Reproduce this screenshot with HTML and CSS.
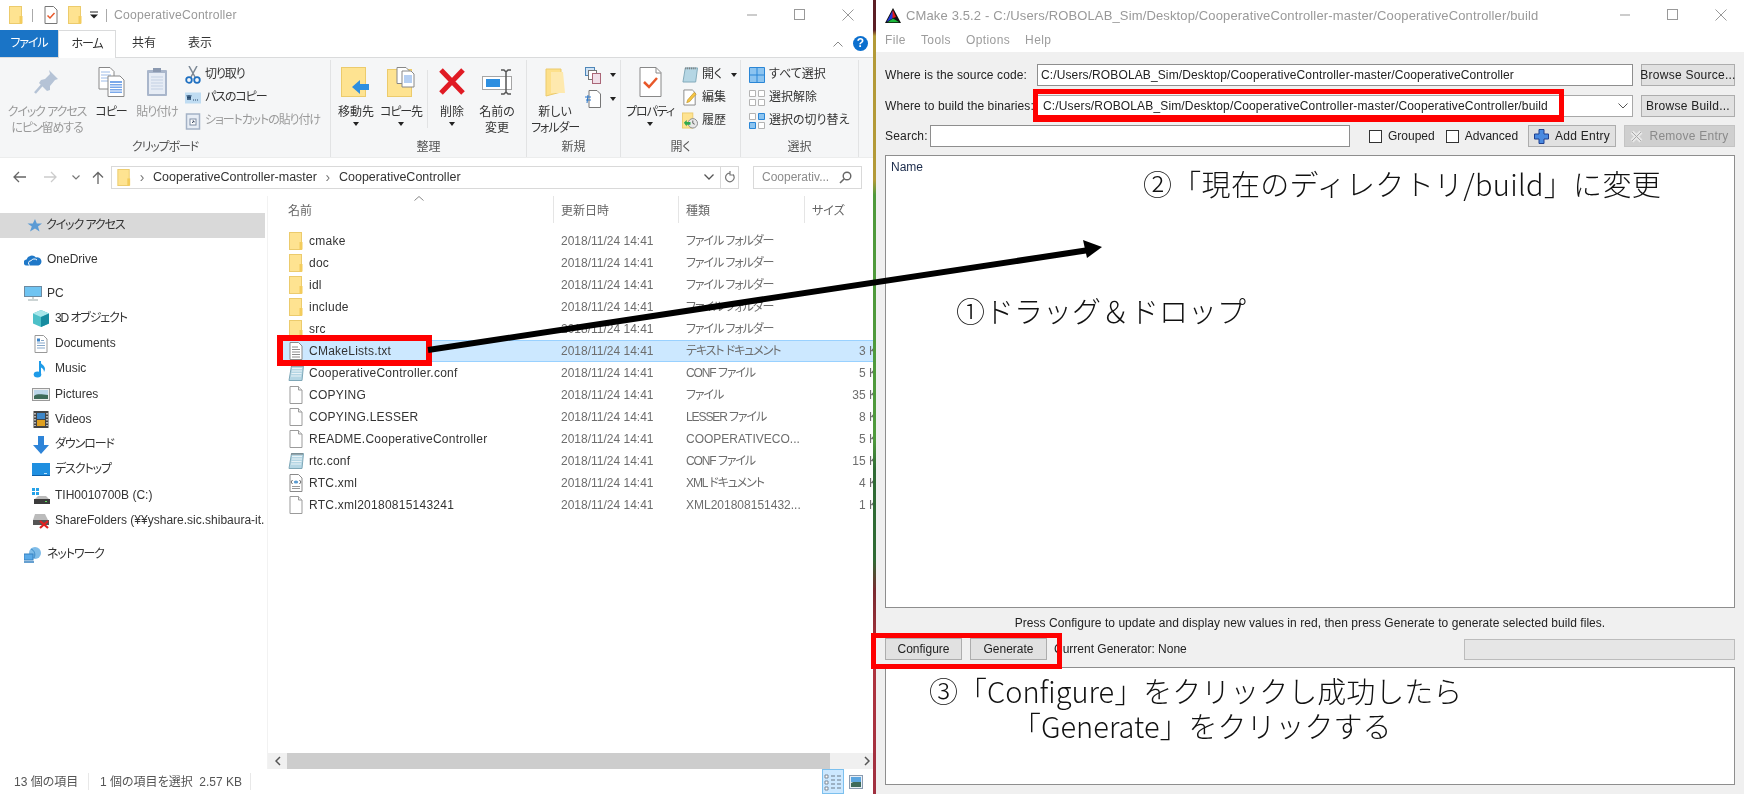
FILE: index.html
```html
<!DOCTYPE html>
<html lang="ja">
<head>
<meta charset="utf-8">
<title>CMake drag and drop</title>
<link rel="stylesheet" href="styles.css">
</head>
<body>
<svg class="defs" width="0" height="0" aria-hidden="true">
  <symbol id="folder" viewBox="0 0 14 18"><rect x=".5" y=".5" width="12" height="17" fill="#fee391" stroke="#eccb6c"/><rect x="10.5" y="10" width="3" height="7.5" fill="#f3cc5c"/></symbol>
  <symbol id="file" viewBox="0 0 14 18"><path d="M1 .5h8.5l3.5 3.5v13.5H1z" fill="#fff" stroke="#9b9b9b"/><path d="M9.5.5V4H13" fill="#eee" stroke="#9b9b9b"/></symbol>
  <symbol id="txt" viewBox="0 0 14 18"><path d="M1 .5h8.5l3.5 3.5v13.5H1z" fill="#fff" stroke="#8a8a8a"/><path d="M3 5h6M3 7.500h8M3 10h8M3 12.500h8M3 15h8" stroke="#8c8c8c"/></symbol>
  <symbol id="conf" viewBox="0 0 16 18"><path d="M3.500 1.500h12l-1.500 15H1z" fill="#b5d6e4" stroke="#7fa8b8"/><path d="M4 4.500h10M4 7h10M3.500 9.500h10M3 12h10" stroke="#e8f2f6"/><path d="M4 1v2M6 1v2M8 1v2M10 1v2M12 1v2M14 1v2" stroke="#777"/></symbol>
  <symbol id="xml" viewBox="0 0 14 18"><path d="M1 .5h8.500l3.500 3.500v13.500H1z" fill="#fff" stroke="#8a8a8a"/><ellipse cx="7" cy="8" rx="2.200" ry="1.600" fill="#5a9bd0"/><path d="M3.500 6L2 8l1.500 2M10.500 6L12 8l-1.500 2" fill="none" stroke="#666"/><path d="M3 12.500h8M3 14.500h8" stroke="#999"/></symbol>
</svg>

<div class="page">
  <section class="explorer">
    <header class="titlebar">
      <svg width="14" height="18"><use href="#folder"/></svg>
      <span class="qsep"></span>
      <svg width="14" height="18" viewBox="0 0 14 18"><path d="M1 .5h8.500l3.500 3.500v13.500H1z" fill="#fff" stroke="#777"/><path d="M3.500 9.500l2.500 2.500 4.500-5" fill="none" stroke="#e8582a" stroke-width="1.500"/></svg>
      <svg class="qfolder" width="14" height="18"><use href="#folder"/></svg>
      <svg class="qdrop" width="8" height="8" viewBox="0 0 8 8"><path d="M0 1h8" stroke="#222"/><path d="M0 3.500h8L4 7.500z" fill="#222"/></svg>
      <span class="qsep"></span>
      <span class="wintitle ex">CooperativeController</span>
      <div class="winctl">
        <svg width="12" height="12" viewBox="0 0 12 12"><path d="M1 6h10" stroke="#999"/></svg>
        <svg width="12" height="12" viewBox="0 0 12 12"><rect x=".5" y=".5" width="10" height="10" fill="none" stroke="#999"/></svg>
        <svg width="12" height="12" viewBox="0 0 12 12"><path d="M.5.500l11 11M11.500.500l-11 11" stroke="#999"/></svg>
      </div>
    </header>

    <nav class="tabs">
      <span class="tab tab-file na">ファイル</span>
      <span class="tab tab-home na">ホーム</span>
      <span class="tab tab-share">共有</span>
      <span class="tab tab-view">表示</span>
      <svg class="collapse" width="10" height="6" viewBox="0 0 10 6"><path d="M.5 5.500L5 1l4.500 4.500" fill="none" stroke="#888"/></svg>
      <span class="help">?</span>
    </nav>

    <div class="ribbon">
      <section class="group g-clip">
        <div class="g-body">
          <div class="big w-pin dim">
            <svg class="bigicon" width="26" height="30" viewBox="0 0 26 30"><path d="M15 3l9 9-3 1-5 6 0 4-3 1-8-8 2-3 4-1 5-5z" fill="#b5c3d6"/><path d="M8 18L1 26" stroke="#b5c3d6" stroke-width="2.500"/></svg>
            <span class="na">クイック アクセス</span><span class="na">にピン留めする</span>
          </div>
          <div class="big w-copy">
            <svg class="bigicon" width="27" height="30" viewBox="0 0 27 30"><path d="M1 .5h11l4 4V22H1z" fill="#fff" stroke="#888"/><path d="M3 5h9M3 8h10M3 11h10M3 14h10" stroke="#9cbbe8"/><path d="M10 9h12l4 4v16.500H10z" fill="#fff" stroke="#888"/><path d="M12 14h12v12H12z" fill="#7aa8ea"/><path d="M12 16.500h12M12 19h12M12 21.500h12M12 24h12" stroke="#fff"/></svg>
            <span class="na">コピー</span>
          </div>
          <div class="big w-paste dim">
            <svg class="bigicon" width="22" height="30" viewBox="0 0 22 30"><rect x="1" y="3" width="20" height="26" rx="1" fill="#a9b6cb"/><rect x="3" y="6" width="16" height="21" fill="#e6ecf5"/><path d="M5 10h12M5 13h12M5 16h12M5 19h12M5 22h12" stroke="#c3d0e3"/><rect x="7" y="1" width="8" height="4" fill="#8b99b0"/></svg>
            <span class="na">貼り付け</span>
          </div>
          <div class="smalls">
            <div class="small"><svg width="16" height="18" viewBox="0 0 16 18"><path d="M4 0l6 11M12 0L6 11" stroke="#7b8794" stroke-width="1.500"/><circle cx="4" cy="14" r="2.800" fill="none" stroke="#1f70c1" stroke-width="1.800"/><circle cx="12" cy="14" r="2.800" fill="none" stroke="#1f70c1" stroke-width="1.800"/></svg><span class="na">切り取り</span></div>
            <div class="small"><svg width="16" height="12" viewBox="0 0 16 12"><rect width="16" height="11" y=".5" fill="#bfdcf2"/><path d="M2 3l1 5 1-5 1 5 1-5M8 8h1M10 8h1M12 8h1" fill="none" stroke="#26496e"/></svg><span class="na">パスのコピー</span></div>
            <div class="small dim"><svg width="16" height="18" viewBox="0 0 16 18"><rect x="1.500" y="2" width="13" height="15" fill="#e7edf5" stroke="#a4b2c6" stroke-width="1.500"/><rect x="5" y="7" width="6" height="6" fill="#fff" stroke="#7d8ca3"/><path d="M7 11l2-2M7.500 9H9v1.500" stroke="#44526a" fill="none"/></svg><span class="na">ショートカットの貼り付け</span></div>
          </div>
        </div>
        <div class="g-label na">クリップボード</div>
      </section>

      <section class="group g-org">
        <div class="g-body">
          <div class="big w-50">
            <svg class="bigicon" width="30" height="30" viewBox="0 0 30 30"><rect x=".5" y=".5" width="24" height="29" fill="#fee391" stroke="#eccb6c"/><path d="M11 22l8-7v4h9v6h-9v4z" fill="#2e8fe0" transform="translate(0 -2)"/></svg>
            <span>移動先</span><i class="caret"></i>
          </div>
          <div class="big w-40">
            <svg class="bigicon" width="28" height="30" viewBox="0 0 28 30"><rect x=".5" y="2.500" width="24" height="27" fill="#fee391" stroke="#eccb6c"/><path d="M10 .5h9l3 3v13H10z" fill="#fff" stroke="#888"/><path d="M15 4h9l3 3v13H15z" fill="#fff" stroke="#888"/><path d="M17 9h8M17 11h8M17 13h8M17 15h8" stroke="#6d9fe6"/></svg>
            <span class="na">コピー先</span><i class="caret"></i>
          </div>
          <span class="vsep"></span>
          <div class="big w-40">
            <svg class="bigicon" width="26" height="30" viewBox="0 0 26 30"><path d="M2 3l22 23M24 3L2 26" stroke="#e01b24" stroke-width="5"/></svg>
            <span>削除</span><i class="caret"></i>
          </div>
          <div class="big w-50">
            <svg class="bigicon" width="30" height="30" viewBox="0 0 30 30"><rect x=".5" y="9.500" width="29" height="13" fill="#fff" stroke="#a5a5a5"/><rect x="4" y="12" width="14" height="8" fill="#2e8fe0"/><path d="M19 3h3l2 2 2-2h3M24 5v20M19 27h3l2-2 2 2h3" fill="none" stroke="#555" stroke-width="1.500"/></svg>
            <span>名前の</span><span>変更</span>
          </div>
        </div>
        <div class="g-label">整理</div>
      </section>

      <section class="group g-new">
        <div class="g-body">
          <div class="big w-56">
            <svg class="bigicon" width="21" height="30" viewBox="0 0 21 30"><path d="M1 2h15v23l-15 4z" fill="#fde08b" stroke="#eccb6c"/><path d="M6 5h12l2 21H6z" fill="#fee9ae"/></svg>
            <span>新しい</span><span class="na">フォルダー</span>
          </div>
          <div class="smalls newsm">
            <div class="small tall"><svg width="16" height="17" viewBox="0 0 16 17"><rect x=".5" y=".5" width="9" height="8" fill="#cfe3f5" stroke="#4e86b8"/><rect x="3.500" y="3.500" width="8" height="9" fill="#fff" stroke="#777"/><rect x="7.500" y="6.500" width="8" height="10" fill="#f0dfe8" stroke="#a67"/></svg><i class="caret inline"></i></div>
            <div class="small tall"><svg width="16" height="18" viewBox="0 0 16 18"><path d="M4 .5h8l3.500 3.500v13.500H4z" fill="#fff" stroke="#777"/><path d="M0 7h6M1 10h5M3 5l-1 8" stroke="#2e78c8"/></svg><i class="caret inline"></i></div>
          </div>
        </div>
        <div class="g-label">新規</div>
      </section>

      <section class="group g-open">
        <div class="g-body">
          <div class="big w-58">
            <svg class="bigicon" width="23" height="30" viewBox="0 0 23 30"><path d="M1 .5h16l5 5V29.500H1z" fill="#fff" stroke="#888"/><path d="M17 .5V6h5" fill="none" stroke="#888"/><path d="M5 15l5 5 8-9" fill="none" stroke="#e8582a" stroke-width="2.500"/></svg>
            <span class="na">プロパティ</span><i class="caret"></i>
          </div>
          <div class="smalls">
            <div class="small"><svg width="17" height="17" viewBox="0 0 17 17"><path d="M3.500 1.500h13l-2 15H1z" fill="#b5d6e4" stroke="#7fa8b8"/><path d="M4 1v2M6 1v2M8 1v2M10 1v2M12 1v2M14 1v2" stroke="#777"/></svg><span>開く</span><i class="caret inline"></i></div>
            <div class="small"><svg width="17" height="17" viewBox="0 0 17 17"><path d="M2 .5h9l3 3v13H2z" fill="#fff" stroke="#888"/><path d="M5 14l1-3 7-8 2 2-7 8z" fill="#f6c544" stroke="#b58a1c" stroke-width=".6"/></svg><span>編集</span></div>
            <div class="small"><svg width="17" height="17" viewBox="0 0 17 17"><rect y=".5" width="11" height="16" x=".5" fill="#fee391" stroke="#eccb6c"/><circle cx="11.500" cy="11.500" r="5" fill="#e8e8e8" stroke="#888"/><path d="M11.500 8.500v3l2 1" stroke="#555" fill="none"/><path d="M2 11l3-3v2h4v3H5v2z" fill="#2fa84f"/></svg><span>履歴</span></div>
          </div>
        </div>
        <div class="g-label">開く</div>
      </section>

      <section class="group g-select">
        <div class="g-body">
          <div class="smalls">
            <div class="small"><svg width="16" height="16" viewBox="0 0 16 16"><path d="M.5.500h15v15H.5zM8 .5v15M.5 8h15" fill="#8cc4f0" stroke="#2a86d6"/></svg><span>すべて選択</span></div>
            <div class="small"><svg width="16" height="16" viewBox="0 0 16 16"><path d="M.5.500h6v6h-6zM9.500.500h6v6h-6zM.5 9.500h6v6h-6zM9.500 9.500h6v6h-6z" fill="#fff" stroke="#b3b3b3"/></svg><span>選択解除</span></div>
            <div class="small"><svg width="16" height="16" viewBox="0 0 16 16"><path d="M.5.500h6v6h-6zM9.500 9.500h6v6h-6z" fill="#fff" stroke="#b3b3b3"/><path d="M9.500.500h6v6h-6zM.5 9.500h6v6h-6z" fill="#8cc4f0" stroke="#2a86d6"/></svg><span>選択の切り替え</span></div>
          </div>
        </div>
        <div class="g-label">選択</div>
      </section>
    </div>

    <div class="addr">
      <svg class="nav nav-back" width="13" height="12" viewBox="0 0 13 12"><path d="M13 6H1.500M6 1L1 6l5 5" fill="none" stroke="#666" stroke-width="1.300"/></svg>
      <svg class="nav nav-fwd" width="13" height="12" viewBox="0 0 13 12"><path d="M0 6h11.500M7 1l5 5-5 5" fill="none" stroke="#ccc" stroke-width="1.300"/></svg>
      <svg class="nav nav-down" width="8" height="5" viewBox="0 0 8 5"><path d="M.5.500L4 4 7.500.500" fill="none" stroke="#777" stroke-width="1.200"/></svg>
      <svg class="nav nav-up" width="12" height="13" viewBox="0 0 12 13"><path d="M6 13V1.500M1 6.500l5-5 5 5" fill="none" stroke="#666" stroke-width="1.300"/></svg>
      <div class="addrbox">
        <svg width="14" height="17"><use href="#folder"/></svg>
        <span class="crumbsep">›</span>
        <span>CooperativeController-master</span>
        <span class="crumbsep">›</span>
        <span>CooperativeController</span>
        <svg class="addr-drop" width="10" height="6" viewBox="0 0 10 6"><path d="M.5.500L5 5 9.500.500" fill="none" stroke="#555" stroke-width="1.300"/></svg>
        <span class="addr-refresh"><svg width="11" height="12" viewBox="0 0 11 12"><path d="M9 3.500a4.300 4.300 0 1 1-2.500-1.300M6 0v4h4" fill="none" stroke="#777" stroke-width="1.200"/></svg></span>
      </div>
      <div class="searchbox"><span>Cooperativ...</span><svg width="13" height="13" viewBox="0 0 13 13"><circle cx="8" cy="5" r="3.800" fill="none" stroke="#666" stroke-width="1.400"/><path d="M5 8l-4 4" stroke="#666" stroke-width="1.600"/></svg></div>
    </div>

    <div class="main">
      <aside class="side">
        <div class="navitem top active"><svg width="15" height="15" viewBox="0 0 15 15"><path d="M8 1l1.800 4.500H15l-4 3 1.500 5L8 10.500 3 13.500l1.800-5L.5 5.500h5.300z" fill="#5b9bd5"/></svg><span class="na">クイック アクセス</span></div>
        <div class="navitem top gap1"><svg width="18" height="12" viewBox="0 0 18 12"><path d="M3 11.500a3 3 0 0 1-.5-6A5.500 5.500 0 0 1 12 3.500a4 4 0 0 1 2.500 8z" fill="#1f78c8"/><path d="M6 11.500a2.500 2.500 0 0 1 1-4.800 4 4 0 0 1 6-.7" fill="none" stroke="#fff"/></svg><span>OneDrive</span></div>
        <div class="navitem top gap"><svg width="18" height="15" viewBox="0 0 18 15"><rect x=".5" y=".5" width="17" height="10" fill="#6fc4f2" stroke="#6d8aa0"/><path d="M9 11v2M4 14h10" stroke="#9aa"/></svg><span>PC</span></div>
        <div class="navitem sub"><svg width="18" height="17" viewBox="0 0 18 17"><path d="M9 0l8 3.500v10L9 17l-8-3.500v-10z" fill="#4cc0c8"/><path d="M1 3.500L9 7l8-3.500L9 0z" fill="#a7e6ea"/><path d="M9 7v10l8-3.500v-10z" fill="#178ca0"/></svg><span class="na">3D オブジェクト</span></div>
        <div class="navitem sub"><svg width="18" height="18" viewBox="0 0 14 18"><path d="M1 .5h8.500l3.500 3.500v13.500H1z" fill="#fff" stroke="#999"/><path d="M3 8h8M3 10.500h8M3 13h8M7 5.500h3" stroke="#86a7c9"/><rect x="3" y="3.500" width="3" height="3" fill="#3b83c8"/></svg><span>Documents</span></div>
        <div class="navitem sub"><svg width="18" height="18" viewBox="0 0 18 18"><path d="M8 1v13" stroke="#1e9be8" stroke-width="2"/><ellipse cx="5.500" cy="14.500" rx="3.800" ry="3" fill="#1e9be8"/><path d="M8 1c1 4 5 4 5 8 0 1-.5 2-1 3 0-3-2-4-4-5z" fill="#1e9be8"/></svg><span>Music</span></div>
        <div class="navitem sub"><svg width="18" height="13" viewBox="0 0 18 13"><rect x=".5" y=".5" width="17" height="12" fill="#eee" stroke="#999"/><rect x="2" y="2" width="14" height="9" fill="#bcd6ea"/><path d="M2 8c4-3 9-1 14-1v4H2z" fill="#3d6a5a"/></svg><span>Pictures</span></div>
        <div class="navitem sub"><svg width="18" height="17" viewBox="0 0 16 17"><rect x=".5" width="15" height="17" fill="#444"/><rect x="4" y="2" width="8" height="6" fill="#3d86c8"/><rect x="4" y="9" width="8" height="6" fill="#e0a020"/><path d="M2 2v13M14 2v13" stroke="#ddd" stroke-dasharray="1.500 1.500" stroke-width="1.500"/></svg><span>Videos</span></div>
        <div class="navitem sub"><svg width="18" height="18" viewBox="0 0 18 18"><path d="M6 0h6v9h5l-8 9-8-9h5z" fill="#2e84d8"/></svg><span class="na">ダウンロード</span></div>
        <div class="navitem sub"><svg width="18" height="14" viewBox="0 0 18 14"><rect y="0" width="18" height="13" fill="#1f8fe0"/><path d="M0 12.500h18" stroke="#0d5ea8"/><path d="M12 10.500h3" stroke="#bfe3fb"/></svg><span class="na">デスクトップ</span></div>
        <div class="navitem sub"><svg width="18" height="17" viewBox="0 0 18 17"><path d="M0 1h3v3H0zM4 1h3v3H4zM0 5h3v3H0zM4 5h3v3H4z" fill="#25a2e8"/><path d="M6 9h8l3 3H3z" fill="#bbb"/><rect x="2" y="12" width="16" height="5" fill="#3b3b3b"/><rect x="13" y="14" width="2" height="1" fill="#5fe05f"/></svg><span>TIH0010700B (C:)</span></div>
        <div class="navitem sub"><svg width="18" height="17" viewBox="0 0 18 17"><path d="M3 2h10l3 6H1z" fill="#bbb"/><rect x="1" y="8" width="16" height="5" fill="#555"/><path d="M8 9l8 7M16 9l-8 7" stroke="#e02020" stroke-width="2.200"/></svg><span>ShareFolders (¥¥yshare.sic.shibaura-it.</span></div>
        <div class="navitem top gap2"><svg width="18" height="16" viewBox="0 0 18 16"><circle cx="11" cy="6" r="6" fill="#7fbce8"/><path d="M7 2c3 1 5 5 3 9" fill="none" stroke="#3b8ac8"/><rect x="0" y="7" width="9" height="6" fill="#5aaae8" stroke="#3580c0"/><path d="M0 15h10" stroke="#3580c0" stroke-width="1.500"/></svg><span class="na">ネットワーク</span></div>
      </aside>

      <div class="list">
        <div class="cols head">
          <span class="hcell name-h">名前<svg class="sortup" width="10" height="5" viewBox="0 0 10 5"><path d="M.5 4.500L5 .5l4.500 4" fill="none" stroke="#888"/></svg></span>
          <span class="hcell">更新日時</span>
          <span class="hcell">種類</span>
          <span class="hcell">サイズ</span>
        </div>
        <div class="rows">
          <div class="cols row"><span class="n"><svg width="16" height="18"><use href="#folder"/></svg>cmake</span><span>2018/11/24 14:41</span><span class="na">ファイル フォルダー</span><span class="sz"></span></div>
          <div class="cols row"><span class="n"><svg width="16" height="18"><use href="#folder"/></svg>doc</span><span>2018/11/24 14:41</span><span class="na">ファイル フォルダー</span><span class="sz"></span></div>
          <div class="cols row"><span class="n"><svg width="16" height="18"><use href="#folder"/></svg>idl</span><span>2018/11/24 14:41</span><span class="na">ファイル フォルダー</span><span class="sz"></span></div>
          <div class="cols row"><span class="n"><svg width="16" height="18"><use href="#folder"/></svg>include</span><span>2018/11/24 14:41</span><span class="na">ファイル フォルダー</span><span class="sz"></span></div>
          <div class="cols row"><span class="n"><svg width="16" height="18"><use href="#folder"/></svg>src</span><span>2018/11/24 14:41</span><span class="na">ファイル フォルダー</span><span class="sz"></span></div>
          <div class="cols row sel"><span class="n"><svg width="16" height="18"><use href="#txt"/></svg>CMakeLists.txt</span><span>2018/11/24 14:41</span><span class="na">テキスト ドキュメント</span><span class="sz">3 KB</span></div>
          <div class="cols row"><span class="n"><svg width="16" height="18"><use href="#conf"/></svg>CooperativeController.conf</span><span>2018/11/24 14:41</span><span class="na">CONF ファイル</span><span class="sz">5 KB</span></div>
          <div class="cols row"><span class="n"><svg width="16" height="18"><use href="#file"/></svg>COPYING</span><span>2018/11/24 14:41</span><span class="na">ファイル</span><span class="sz">35 KB</span></div>
          <div class="cols row"><span class="n"><svg width="16" height="18"><use href="#file"/></svg>COPYING.LESSER</span><span>2018/11/24 14:41</span><span class="na">LESSER ファイル</span><span class="sz">8 KB</span></div>
          <div class="cols row"><span class="n"><svg width="16" height="18"><use href="#file"/></svg>README.CooperativeController</span><span>2018/11/24 14:41</span><span>COOPERATIVECO...</span><span class="sz">5 KB</span></div>
          <div class="cols row"><span class="n"><svg width="16" height="18"><use href="#conf"/></svg>rtc.conf</span><span>2018/11/24 14:41</span><span class="na">CONF ファイル</span><span class="sz">15 KB</span></div>
          <div class="cols row"><span class="n"><svg width="16" height="18"><use href="#xml"/></svg>RTC.xml</span><span>2018/11/24 14:41</span><span class="na">XML ドキュメント</span><span class="sz">4 KB</span></div>
          <div class="cols row"><span class="n"><svg width="16" height="18"><use href="#file"/></svg>RTC.xml20180815143241</span><span>2018/11/24 14:41</span><span>XML201808151432...</span><span class="sz">1 KB</span></div>
        </div>
        <div class="hscroll">
          <span class="sarrow"><svg width="6" height="10" viewBox="0 0 6 10"><path d="M5 1L1 5l4 4" fill="none" stroke="#555" stroke-width="1.500"/></svg></span>
          <span class="thumb"></span>
          <span class="sarrow"><svg width="6" height="10" viewBox="0 0 6 10"><path d="M1 1l4 4-4 4" fill="none" stroke="#555" stroke-width="1.500"/></svg></span>
        </div>
      </div>
    </div>

    <footer class="status">
      <span class="st st-a">13 個の項目</span>
      <span class="st st-b">1 個の項目を選択&nbsp;&nbsp;2.57 KB</span>
      <span class="viewbtn on"><svg width="18" height="18" viewBox="0 0 18 18"><path d="M1 2h3v3H1zM1 8h3v3H1zM1 14h3v3H1z" fill="#fff" stroke="#7d8a99"/><path d="M7 3h4M13 3h4M7 7h4M13 7h4M7 11h4M13 11h4M7 15h4M13 15h4" stroke="#6d7a88"/></svg></span>
      <span class="viewbtn"><svg width="14" height="14" viewBox="0 0 14 14"><rect x=".5" y=".5" width="13" height="13" fill="#e8eff6" stroke="#8a9bb0"/><path d="M2 8c3-2 7-1 10-1v5H2z" fill="#3d6a5a"/><rect x="2" y="2" width="10" height="5" fill="#5ca6e0"/></svg></span>
    </footer>
  </section>

  <div class="strip"></div>

  <section class="cmake">
    <header class="titlebar ctitle">
      <svg width="16" height="15" viewBox="0 0 16 15"><path d="M8 0L0 15h16z" fill="#111"/><path d="M8 2L5 9l3 1 3-1z" fill="#e21a1a"/><path d="M7.500 3L1.500 14l6-3.500z" fill="#2038d8"/><path d="M2.500 14.200h11.800L8 10.500z" fill="#1cb83a"/></svg>
      <span class="wintitle cm">CMake 3.5.2 - C:/Users/ROBOLAB_Sim/Desktop/CooperativeController-master/CooperativeController/build</span>
      <div class="winctl">
        <svg width="12" height="12" viewBox="0 0 12 12"><path d="M1 6h10" stroke="#999"/></svg>
        <svg width="12" height="12" viewBox="0 0 12 12"><rect x=".5" y=".5" width="10" height="10" fill="none" stroke="#999"/></svg>
        <svg width="12" height="12" viewBox="0 0 12 12"><path d="M.5.500l11 11M11.500.500l-11 11" stroke="#999"/></svg>
      </div>
    </header>
    <nav class="menubar"><span>File</span><span>Tools</span><span>Options</span><span>Help</span></nav>
    <div class="cbody">
      <div class="crow first">
        <label class="clabel">Where is the source code:</label>
        <div class="field">C:/Users/ROBOLAB_Sim/Desktop/CooperativeController-master/CooperativeController</div>
        <button class="btn browse" type="button">Browse Source...</button>
      </div>
      <div class="crow">
        <label class="clabel">Where to build the binaries:</label>
        <div class="field combo"><span>C:/Users/ROBOLAB_Sim/Desktop/CooperativeController-master/CooperativeController/build</span><svg width="10" height="6" viewBox="0 0 10 6"><path d="M.5.500L5 5 9.500.500" fill="none" stroke="#555"/></svg></div>
        <button class="btn browse" type="button">Browse Build...</button>
      </div>
      <div class="crow">
        <label class="slabel">Search:</label>
        <div class="field searchf"></div>
        <span class="check"><i></i>Grouped</span>
        <span class="check"><i></i>Advanced</span>
        <button class="btn add" type="button"><svg width="15" height="15" viewBox="0 0 15 15"><path d="M5 .5h5v4.500h4.500v5H10v4.500H5V10H.5V5H5z" fill="#4a8ae0" stroke="#1f3f8f"/></svg>Add Entry</button>
        <button class="btn remove" type="button"><svg width="13" height="13" viewBox="0 0 13 13"><path d="M2 2l9 9M11 2l-9 9" stroke="#e8e8e8" stroke-width="4"/><path d="M2 2l9 9M11 2l-9 9" stroke="#aaa" stroke-width="1"/></svg>Remove Entry</button>
      </div>
      <div class="tree"><span class="treehead">Name</span></div>
      <p class="hint">Press Configure to update and display new values in red, then press Generate to generate selected build files.</p>
      <div class="crow actions">
        <button class="btn act" type="button">Configure</button>
        <button class="btn act" type="button">Generate</button>
        <span class="gen">Current Generator: None</span>
        <span class="progress"></span>
      </div>
      <div class="output"></div>
    </div>
  </section>

  <div class="mark mark-list"></div>
  <div class="mark mark-build"></div>
  <div class="mark mark-act"></div>
  <svg class="arrow" width="700" height="125" viewBox="0 0 700 125"><path d="M3 115L664 15" stroke="#000" stroke-width="6"/><path d="M677 12L658 5l4 18z" fill="#000"/></svg>
  <div class="note note-2">②「現在のディレクトリ/build」に変更</div>
  <div class="note note-1">①ドラッグ＆ドロップ</div>
  <div class="note note-3">③「Configure」をクリックし成功したら<br><span class="indent">「Generate」をクリックする</span></div>
</div>
</body>
</html>
```

FILE: styles.css
```css
* { box-sizing: border-box; }
html, body { margin: 0; padding: 0; }
body { width: 1744px; height: 794px; overflow: hidden; background: #fff; }
.defs { position: absolute; }
.page {
  position: relative; display: flex; width: 1744px; height: 794px;
  font: 12px/15px "Liberation Sans", "Noto Sans CJK JP", sans-serif;
  font-feature-settings: "palt"; color: #333; filter: blur(.4px);
}
svg { flex: none; display: block; }
.na { letter-spacing: -1.1px; }
.dim { color: #9a9a9a; }

/* explorer */
.explorer { width: 873px; height: 794px; display: flex; flex-direction: column; background: #fff; overflow: hidden; }
.titlebar { height: 30px; flex: none; display: flex; align-items: center; padding-left: 9px; }
.qsep { width: 1px; height: 13px; background: #aaa; margin: 0 11px 0 9px; }
.qfolder { margin-left: 10px; }
.qdrop { margin-left: 8px; }
.qdrop + .qsep { margin: 0 7px 0 8px; }
.wintitle { color: #999; font-size: 13px; letter-spacing: .2px; }
.wintitle.ex { font-size: 12.200px; }
.winctl { margin-left: auto; display: flex; gap: 36px; padding-right: 19px; }
.ctitle .winctl { padding-right: 17px; }
.tabs { height: 27px; flex: none; display: flex; align-items: stretch; padding-right: 5px; }
.tab { display: flex; align-items: center; justify-content: center; }
.tab-file { width: 58px; background: #1a74c6; color: #fff; }
.tab-home { width: 58px; border: 1px solid #dadbdc; border-bottom: 0; background: #fff; margin-bottom: -1px; position: relative; z-index: 1; }
.tab-share { width: 56px; }
.tab-view { width: 56px; }
.collapse { margin: auto 10px auto auto; }
.help { width: 15px; height: 15px; margin: auto 0; border-radius: 50%; background: #0b6fce; color: #fff; font: bold 12px/15px "Liberation Sans", sans-serif; text-align: center; }
.ribbon { height: 101px; flex: none; display: flex; background: #f5f6f7; border-top: 1px solid #dadbdc; border-bottom: 1px solid #eceded; }
.group { display: flex; flex-direction: column; border-right: 1px solid #e2e3e4; margin-top: 2px; height: 97px; }
.g-clip { width: 331px; }
.g-org { width: 196px; }
.g-new { width: 94px; }
.g-open { width: 120px; }
.g-select { width: 118px; padding-left: 8px; }
.g-body { flex: 1; display: flex; min-height: 0; }
.g-label { height: 20px; line-height: 20px; text-align: center; color: #555; }
.g-select .g-label { margin-left: -8px; }
.big { display: flex; flex-direction: column; align-items: center; padding-top: 7px; position: relative; line-height: 16px; white-space: nowrap; }
.bigicon { height: 30px; margin-bottom: 7px; }
.w-pin { width: 80px; margin-left: 7px; }
.w-copy { width: 40px; margin-left: 4px; }
.w-paste { width: 50px; margin-left: 1px; }
.w-50 { width: 50px; }
.w-40 { width: 40px; }
.w-56 { width: 56px; }
.w-58 { width: 58px; }
.caret { display: block; width: 0; height: 0; border: 3px solid transparent; border-top: 4px solid #222; border-bottom: 0; margin-top: 2px; }
.caret.inline { margin: 0 0 0 5px; }
.vsep { width: 1px; height: 58px; background: #e2e3e4; margin: 10px 4px 0 6px; }
.smalls { display: flex; flex-direction: column; padding-top: 3px; margin-left: 3px; }
.g-select .smalls { margin-left: 0; }
.small { height: 23px; display: flex; align-items: center; gap: 4px; white-space: nowrap; }
.small > svg { width: 16px; }
.newsm { margin-left: 2px; }
.small.tall { height: 24px; }
.addr { height: 38px; flex: none; display: flex; align-items: center; }
.nav-back { margin-left: 13px; }
.nav-fwd { margin-left: 18px; }
.nav-down { margin-left: 15px; }
.nav-up { margin-left: 12px; }
.addrbox { width: 628px; height: 23px; margin-left: 7px; border: 1px solid #d9d9d9; display: flex; align-items: center; padding-left: 5px; color: #333; font-size: 12.500px; }
.crumbsep { width: 22px; text-align: center; color: #777; font-size: 14px; }
.addr-drop { margin-left: auto; }
.addr-refresh { width: 18px; height: 21px; margin-left: 6px; border-left: 1px solid #d9d9d9; display: flex; align-items: center; justify-content: center; }
.searchbox { width: 109px; height: 23px; margin-left: 14px; border: 1px solid #d9d9d9; display: flex; align-items: center; justify-content: space-between; padding: 0 9px 0 8px; color: #8b8b8b; }
.main { flex: 1; display: flex; min-height: 0; }
.side { width: 268px; flex: none; border-right: 1px solid #f2f2f2; padding-top: 17px; overflow: hidden; }
.navitem { height: 25.250px; display: flex; align-items: center; white-space: nowrap; color: #333; }
.navitem svg { margin-right: 5px; }
.navitem.top { padding-left: 24px; }
.navitem.sub { padding-left: 32px; }
.active { background: #d9d9d9; width: 265px; }
.active svg { margin: 0 4px 0 3px; }
.gap1 { margin-top: 9px; }
.gap { margin-top: 8px; }
.gap2 { margin-top: 9px; }
.list { flex: 1; min-width: 0; display: flex; flex-direction: column; overflow: hidden; }
.cols { display: grid; grid-template-columns: 276px 125px 126px 80px; margin-left: 10px; white-space: nowrap; }
.head { height: 27px; color: #666; flex: none; margin-bottom: 7px; }
.hcell { display: flex; align-items: center; padding: 3px 0 0 7px; border-right: 1px solid #e5e5e5; position: relative; }
.name-h { padding-left: 10px; }
.sortup { position: absolute; left: 50%; top: 0; margin-left: -2px; }
.rows { flex: 1; min-height: 0; }
.row { height: 22px; align-items: center; color: #6d6d6d; border: 1px solid transparent; border-left: 0; border-right: 0; }
.row > span { padding-left: 7px; }
.row .n { display: flex; align-items: center; gap: 5px; padding-left: 10px; color: #333; letter-spacing: .25px; }
.row .sz { padding: 0; text-align: right; }
.sel { background: #cce8ff; border-color: #99d1ff; }
.hscroll { height: 16px; flex: none; display: flex; background: #f0f0f0; }
.sarrow { width: 19px; flex: none; display: flex; align-items: center; justify-content: center; }
.thumb { flex: 1; background: #cdcdcd; }
.hscroll .sarrow:last-child { width: 43px; justify-content: flex-end; padding-right: 3px; }
.status { height: 25px; flex: none; display: flex; align-items: center; color: #555; }
.st { height: 17px; padding-top: 2px; border-right: 1px solid #e8e8e8; white-space: nowrap; }
.st-a { width: 89px; padding-left: 14px; }
.st-b { width: 162px; padding-left: 11px; }
.viewbtn { width: 22px; height: 25px; display: flex; align-items: center; justify-content: center; margin-left: 3px; }
.viewbtn.on { margin-left: auto; background: #cce8ff; border: 1px solid #7cc0ee; }
.viewbtn:last-child { margin-right: 8px; width: 18px; }

/* strip between windows */
.strip { width: 3px; flex: none; background: linear-gradient(#5b1e24 0, #5b1e24 30px, #b39a38 36px, #b39a38 180px, #4f9a3c 195px, #4f9a3c 440px, #2f6a34 470px, #2f6a34 560px, #7a2a30 590px, #b0343f 660px, #a03040 794px); }

/* cmake */
.cmake { flex: 1; min-width: 0; display: flex; flex-direction: column; background: #fff; color: #222; }
.ctitle { padding-left: 9px; }
.wintitle.cm { margin-left: 5px; font-size: 13px; letter-spacing: .14px; }
.menubar { height: 22px; flex: none; display: flex; align-items: center; gap: 15px; padding: 0 0 1px 9px; color: #9c9c9c; font-size: 12px; letter-spacing: .4px; }
.cbody { flex: 1; min-height: 0; display: flex; flex-direction: column; background: #f0f0f0; padding: 12px 9px 9px; }
.crow { display: flex; align-items: center; height: 22px; margin-bottom: 8px; flex: none; white-space: nowrap; }
.crow.first { margin-bottom: 9px; }
.clabel { width: 152px; flex: none; letter-spacing: .1px; }
.slabel { width: 45px; flex: none; letter-spacing: .2px; }
.field { flex: 1; min-width: 0; height: 22px; background: #fff; border: 1px solid #8e8e8e; padding: 0 3px; line-height: 20px; font-size: 12px; letter-spacing: .12px; color: #222; }
.combo { display: flex; align-items: center; justify-content: space-between; padding: 0 4px 0 5px; border-color: #a8a8a8; letter-spacing: .15px; }
.btn { height: 22px; padding: 0; border: 1px solid #adadad; background: #e1e1e1; font: inherit; color: #222; letter-spacing: .25px; display: flex; align-items: center; justify-content: center; gap: 6px; white-space: nowrap; }
.browse { width: 94px; margin-left: 8px; }
.searchf { flex: none; width: 420px; }
.check { display: flex; align-items: center; gap: 6px; }
.check i { display: block; width: 13px; height: 13px; border: 1px solid #333; background: #fff; }
.check:first-of-type { margin-left: 19px; }
.check + .check { margin-left: 11px; }
.add { width: 88px; margin-left: auto; }
.remove { width: 111px; margin-left: 8px; background: #cfcfcf; border-color: #c4c4c4; color: #8a8a8a; }
.tree { height: 453px; flex: none; background: #fff; border: 1px solid #8e8e8e; padding: 4px 5px; }
.treehead { color: #1a2a4a; }
.hint { margin: 0; height: 30px; flex: none; line-height: 30px; text-align: center; color: #222; font-size: 12px; letter-spacing: .05px; }
.actions { margin-bottom: 7px; }
.act { width: 77px; margin-right: 8px; letter-spacing: 0; }
.gen { margin-left: -1px; }
.progress { width: 271px; height: 21px; margin-left: auto; background: #e6e6e6; border: 1px solid #bcbcbc; }
.output { flex: 1; min-height: 0; background: #fff; border: 1px solid #8e8e8e; }

/* overlay annotations */
.mark { position: absolute; border: 5px solid #f00; }
.mark-list { left: 277px; top: 335px; width: 155px; height: 31px; border-width: 6px; }
.mark-build { left: 1033px; top: 89px; width: 531px; height: 33px; border-width: 5px 5px 7px; }
.mark-act { left: 871px; top: 633px; width: 191px; height: 36px; }
.arrow { position: absolute; left: 425px; top: 235px; }
.note { position: absolute; font-family: "Noto Sans CJK JP", sans-serif; font-size: 29px; line-height: 35px; color: #111; font-weight: 300; white-space: nowrap; font-feature-settings: normal; }
.note-2 { left: 1143px; top: 166px; letter-spacing: .3px; }
.note-1 { left: 956px; top: 293px; }
.note-3 { left: 929px; top: 673px; }
.indent { margin-left: 83px; }
```
